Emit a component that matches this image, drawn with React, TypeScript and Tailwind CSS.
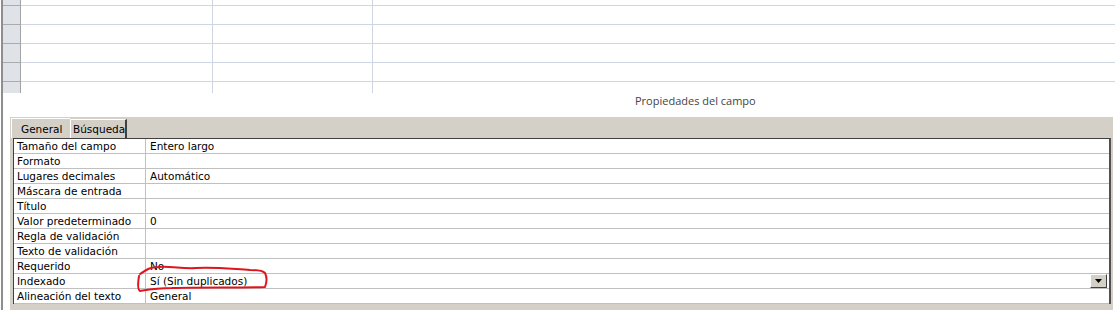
import React from "react";

const props = [
  { label: "Tamaño del campo", value: "Entero largo" },
  { label: "Formato", value: "" },
  { label: "Lugares decimales", value: "Automático" },
  { label: "Máscara de entrada", value: "" },
  { label: "Título", value: "" },
  { label: "Valor predeterminado", value: "0" },
  { label: "Regla de validación", value: "" },
  { label: "Texto de validación", value: "" },
  { label: "Requerido", value: "No" },
  { label: "Indexado", value: "Sí (Sin duplicados)", combo: true },
  { label: "Alineación del texto", value: "General" },
];

function GridRow({ h, top = true }: { h: string; top?: boolean }) {
  return (
    <div className={`flex ${h}`}>
      <div className={`w-[18px] shrink-0 bg-[#dfe3e8] border-r border-[#a3a3a3] ${top ? "border-t border-t-[#a9abae]" : ""}`} />
      <div className={`w-[192px] shrink-0 border-r border-[#cfd6e2] ${top ? "border-t border-t-[#cfd6e2]" : ""}`} />
      <div className={`w-[160px] shrink-0 border-r border-[#cfd6e2] ${top ? "border-t border-t-[#cfd6e2]" : ""}`} />
      <div className={`flex-1 ${top ? "border-t border-[#cfd6e2]" : ""}`} />
    </div>
  );
}

function DropButton() {
  return (
    <div className="absolute right-[2px] top-0 w-[17px] h-[14px] bg-[#d4d0c8] border-t border-l border-white border-r border-b border-r-[#404040] border-b-[#404040] flex items-center justify-center">
      <svg width="7" height="5" viewBox="0 0 7 5">
        <path d="M0 0 H7 L3.5 4 Z" fill="#000" />
      </svg>
    </div>
  );
}

export default function App() {
  return (
    <div
      className="relative w-[1115px] h-[310px] overflow-hidden bg-white"
      style={{ fontFamily: "'DejaVu Sans', Verdana, sans-serif" }}
    >
      <div className="ml-px h-full border-l-2 border-[#8e8e8e]">
        {/* datasheet grid */}
        <div className="h-[93px]">
          <GridRow h="h-[5px]" top={false} />
          <GridRow h="h-[19px]" />
          <GridRow h="h-[19px]" />
          <GridRow h="h-[19px]" />
          <GridRow h="h-[19px]" />
          <GridRow h="h-[12px]" />
        </div>

        <div className="h-[24px] pl-[632px] leading-[16px] text-[11px] text-[#444]" style={{ fontFamily: "'Open Sans', 'DejaVu Sans', sans-serif" }}>
          Propiedades del campo
        </div>

        {/* property panel */}
        <div className="ml-[7px] w-[1103px] h-[193px] bg-[#d4d0c8] text-[10.5px] text-black">
          <div className="flex h-[21px] items-end pl-px">
            <div className="h-[20px] w-[59px] pl-[9px] pt-[3px] border-t border-l border-white">General</div>
            <div className="h-[19px] w-[57px] pl-[2px] pt-[2px] border-t border-l border-white border-r-2 border-r-[#404040]">Búsqueda</div>
          </div>
          <div className="ml-[3px] w-[1098px] bg-white border-t border-l border-[#404040] border-r-2 border-r-[#505050]">
            {props.map((p) => (
              <div key={p.label} className="flex h-[15px] border-b border-[#c0c0c0] leading-[14px]">
                <div className="w-[132px] shrink-0 pl-[3px] border-r border-[#c0c0c0] whitespace-nowrap">{p.label}</div>
                <div className="relative flex-1 pl-[4px] whitespace-nowrap">
                  {p.value}
                  {p.combo && <DropButton />}
                </div>
              </div>
            ))}
          </div>
        </div>
      </div>

      {/* red annotation */}
      <svg className="absolute left-[132px] top-[262px]" width="140" height="34" viewBox="0 0 140 34" fill="none">
        <path
          d="M8 12 C14 8, 18 5, 26 5 C40 4, 50 7, 64 6 C84 5, 100 7, 118 8 C126 8, 131 9, 133 11 C135 15, 135 20, 133 25 C110 26, 70 25, 40 26 C25 26, 14 28, 8 29 C5 27, 6 20, 7 14"
          stroke="#e0141e"
          strokeWidth="2"
          strokeLinecap="round"
          strokeLinejoin="round"
        />
      </svg>
    </div>
  );
}
